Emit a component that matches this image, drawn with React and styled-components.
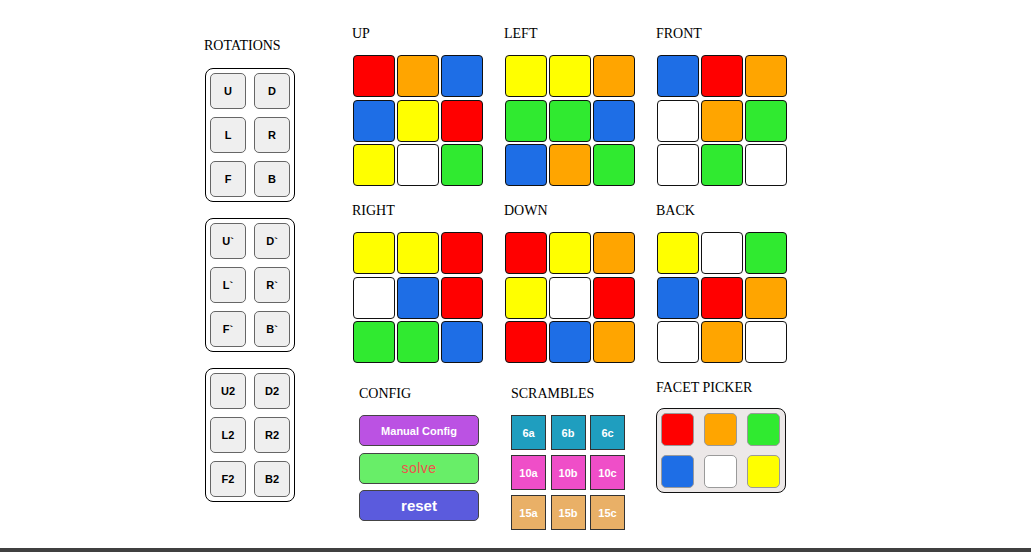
import React from 'react';
import styled, { createGlobalStyle } from 'styled-components';

const GlobalStyle = createGlobalStyle`
  html, body {
    margin: 0;
    padding: 0;
    background: #fff;
  }
  body {
    font-family: "Liberation Serif", "Times New Roman", serif;
  }
`;

const COLORS = {
  R: '#ff0000',
  O: '#ffa500',
  Y: '#ffff00',
  G: '#30ea30',
  B: '#1e6ee6',
  W: '#ffffff',
};

const FACES = [
  { name: 'UP', cells: 'ROBBYRYWG' },
  { name: 'LEFT', cells: 'YYOGGBBOG' },
  { name: 'FRONT', cells: 'BROWOGWGW' },
  { name: 'RIGHT', cells: 'YYRWBRGGB' },
  { name: 'DOWN', cells: 'RYOYWRRBO' },
  { name: 'BACK', cells: 'YWGBROWOW' },
];

const ROTATION_GROUPS = [
  ['U', 'D', 'L', 'R', 'F', 'B'],
  ['U`', 'D`', 'L`', 'R`', 'F`', 'B`'],
  ['U2', 'D2', 'L2', 'R2', 'F2', 'B2'],
];

const SCRAMBLES = [
  { bg: '#1f9ebf', items: ['6a', '6b', '6c'] },
  { bg: '#ef4ec8', items: ['10a', '10b', '10c'] },
  { bg: '#e9b067', items: ['15a', '15b', '15c'] },
];

const Page = styled.div`
  height: 552px;
  display: flex;
  flex-direction: column;
  overflow: hidden;
`;

const Main = styled.div`
  flex: 1;
  display: flex;
  align-items: flex-start;
  padding-left: 204px;
`;

const BottomBar = styled.div`
  height: 4px;
  background: #404040;
`;

const Label = styled.div`
  font-size: 14px;
  line-height: 16px;
  color: #000;
  white-space: nowrap;
`;

const RotationsColumn = styled.div`
  display: flex;
  flex-direction: column;
  padding-top: 38px;
  width: 91px;
`;

const RotationsLabel = styled(Label)`
  margin-bottom: 14px;
`;

const RotationBox = styled.div`
  box-sizing: border-box;
  width: 90px;
  margin-left: 1px;
  margin-bottom: 16px;
  padding: 4px;
  border: 1px solid #000;
  border-radius: 8px;
  display: grid;
  grid-template-columns: 36px 36px;
  gap: 8px;
`;

const RotationButton = styled.button`
  box-sizing: border-box;
  width: 36px;
  height: 36px;
  padding: 0;
  border: 1px solid #666;
  border-radius: 5px;
  background: #efefef;
  font-family: "Liberation Sans", Arial, sans-serif;
  font-size: 11px;
  font-weight: bold;
  color: #000;
`;

const RightArea = styled.div`
  margin-left: 57px;
  display: flex;
  flex-direction: column;
`;

const FaceGrid = styled.div`
  display: grid;
  grid-template-columns: repeat(3, 131px);
  column-gap: 21px;
  row-gap: 17px;
  padding-top: 26px;
`;

const Face = styled.div`
  display: flex;
  flex-direction: column;
`;

const FaceLabel = styled(Label)`
  margin-bottom: 13px;
`;

const Cells = styled.div`
  display: grid;
  grid-template-columns: repeat(3, 42px);
  grid-auto-rows: 42px;
  column-gap: 2px;
  row-gap: 2.5px;
  margin-left: 1px;
`;

const Cell = styled.div`
  box-sizing: border-box;
  border: 1px solid #111;
  border-radius: 4px;
  background: ${(p) => p.$color};
`;

const BottomRow = styled.div`
  display: flex;
  align-items: flex-start;
  margin-top: 16px;
`;

const Section = styled.div`
  display: flex;
  flex-direction: column;
  margin-left: ${(p) => p.$ml}px;
  padding-top: ${(p) => p.$pt}px;
`;

const SectionLabel = styled(Label)`
  margin-bottom: ${(p) => p.$mb}px;
`;

const ConfigList = styled.div`
  display: flex;
  flex-direction: column;
  gap: 6.5px;
`;

const ConfigButton = styled.button`
  box-sizing: border-box;
  width: 120px;
  height: 31px;
  padding: 0;
  border: 1px solid #444;
  border-radius: 5px;
  background: ${(p) => p.$bg};
  color: ${(p) => p.$fg};
  font-family: "Liberation Sans", Arial, sans-serif;
  font-size: ${(p) => p.$size}px;
  font-weight: ${(p) => (p.$bold ? 'bold' : 'normal')};
  letter-spacing: ${(p) => p.$spacing || 0}px;
`;

const ScrambleGrid = styled.div`
  display: grid;
  grid-template-columns: repeat(3, 35px);
  grid-auto-rows: 35px;
  column-gap: 4.5px;
  row-gap: 5px;
`;

const ScrambleTile = styled.button`
  box-sizing: border-box;
  padding: 0;
  border: 1px solid #333;
  border-radius: 0;
  background: ${(p) => p.$bg};
  color: #fff;
  font-family: "Liberation Sans", Arial, sans-serif;
  font-size: 11px;
  font-weight: bold;
`;

const PickerBox = styled.div`
  box-sizing: border-box;
  width: 130px;
  padding: 4px;
  border: 1.5px solid #111;
  border-radius: 8px;
  background: #ece8e8;
  display: grid;
  grid-template-columns: repeat(3, 33px);
  grid-auto-rows: 33px;
  column-gap: 10px;
  row-gap: 9px;
`;

const PickerSwatch = styled.div`
  box-sizing: border-box;
  border: 1px solid #9a9a9a;
  border-radius: 5px;
  background: ${(p) => p.$color};
`;

export default function App() {
  return (
    <Page>
      <GlobalStyle />
      <Main>
        <RotationsColumn>
          <RotationsLabel>ROTATIONS</RotationsLabel>
          {ROTATION_GROUPS.map((group, i) => (
            <RotationBox key={i}>
              {group.map((m) => (
                <RotationButton key={m}>{m}</RotationButton>
              ))}
            </RotationBox>
          ))}
        </RotationsColumn>

        <RightArea>
          <FaceGrid>
            {FACES.map((face) => (
              <Face key={face.name}>
                <FaceLabel>{face.name}</FaceLabel>
                <Cells>
                  {face.cells.split('').map((c, i) => (
                    <Cell key={i} $color={COLORS[c]} />
                  ))}
                </Cells>
              </Face>
            ))}
          </FaceGrid>

          <BottomRow>
            <Section $ml={7} $pt={7}>
              <SectionLabel $mb={13}>CONFIG</SectionLabel>
              <ConfigList>
                <ConfigButton $bg="#bb52e3" $fg="#fff" $size={11} $bold>
                  Manual Config
                </ConfigButton>
                <ConfigButton $bg="#68ee68" $fg="#f0504c" $size={14} $spacing={0.5}>
                  solve
                </ConfigButton>
                <ConfigButton $bg="#5b5bdd" $fg="#fff" $size={15} $bold>
                  reset
                </ConfigButton>
              </ConfigList>
            </Section>

            <Section $ml={32} $pt={7}>
              <SectionLabel $mb={13}>SCRAMBLES</SectionLabel>
              <ScrambleGrid>
                {SCRAMBLES.map((row) =>
                  row.items.map((s) => (
                    <ScrambleTile key={s} $bg={row.bg}>
                      {s}
                    </ScrambleTile>
                  ))
                )}
              </ScrambleGrid>
            </Section>

            <Section $ml={31} $pt={1}>
              <SectionLabel $mb={12}>FACET PICKER</SectionLabel>
              <PickerBox>
                {['R', 'O', 'G', 'B', 'W', 'Y'].map((c) => (
                  <PickerSwatch key={c} $color={COLORS[c]} />
                ))}
              </PickerBox>
            </Section>
          </BottomRow>
        </RightArea>
      </Main>
      <BottomBar />
    </Page>
  );
}
